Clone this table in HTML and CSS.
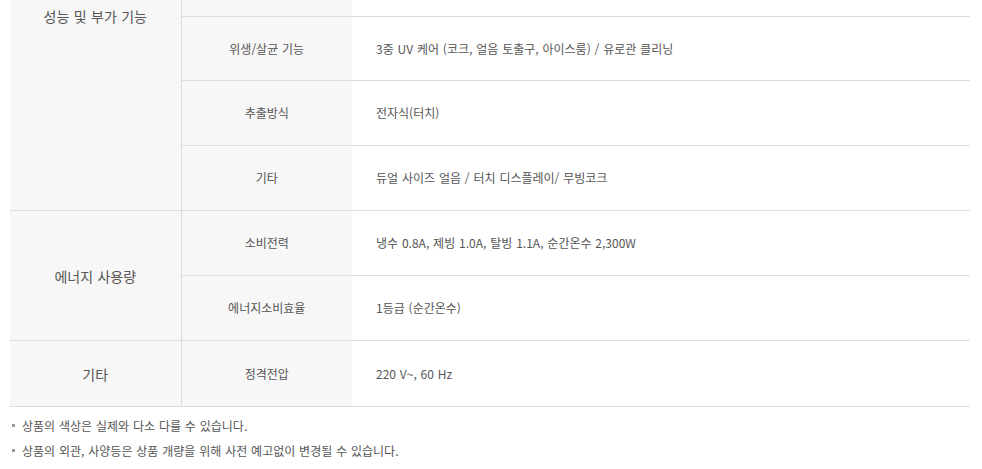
FILE: index.html
```html
<!DOCTYPE html>
<html lang="ko">
<head>
<meta charset="utf-8">
<link rel="stylesheet" href="styles.css">
</head>
<body>
<div class="spec">
  <table class="spec-table">
    <colgroup>
      <col class="c1"><col class="c2"><col class="c3">
    </colgroup>
    <tbody>
      <tr class="row-cut">
        <th class="group group-top" rowspan="4"><span>성능 및 부가 기능</span></th>
        <th class="sub"></th>
        <td class="val"></td>
      </tr>
      <tr class="row-first">
        <th class="sub">위생/살균 기능</th>
        <td class="val">3중 UV 케어 (코크, 얼음 토출구, 아이스룸) / 유로관 클리닝</td>
      </tr>
      <tr>
        <th class="sub">추출방식</th>
        <td class="val">전자식(터치)</td>
      </tr>
      <tr>
        <th class="sub">기타</th>
        <td class="val">듀얼 사이즈 얼음 / 터치 디스플레이/ 무빙코크</td>
      </tr>
      <tr>
        <th class="group" rowspan="2">에너지 사용량</th>
        <th class="sub">소비전력</th>
        <td class="val">냉수 0.8A, 제빙 1.0A, 탈빙 1.1A, 순간온수 2,300W</td>
      </tr>
      <tr>
        <th class="sub">에너지소비효율</th>
        <td class="val">1등급 (순간온수)</td>
      </tr>
      <tr class="row-last">
        <th class="group">기타</th>
        <th class="sub">정격전압</th>
        <td class="val">220 V~, 60 Hz</td>
      </tr>
    </tbody>
  </table>
  <ul class="notes">
    <li>상품의 색상은 실제와 다소 다를 수 있습니다.</li>
    <li>상품의 외관, 사양등은 상품 개량을 위해 사전 예고없이 변경될 수 있습니다.</li>
  </ul>
</div>
</body>
</html>
```

FILE: styles.css
```css
html, body {
  margin: 0;
  padding: 0;
  background: #ffffff;
}
body {
  font-family: "Noto Sans CJK KR", "Noto Sans", sans-serif;
  color: #555555;
}
.spec {
  padding: 0 12px 0 10px;
}
.spec-table {
  width: 960px;
  border-collapse: collapse;
  table-layout: fixed;
  font-size: 12px;
  line-height: 20px;
  word-spacing: 0.5px;
}
.c1 { width: 171px; }
.c2 { width: 171px; }
.c3 { width: 618px; }
.spec-table th,
.spec-table td {
  font-weight: 400;
  height: 64px;
  padding: 0;
  border-bottom: 1px solid #dddddd;
  vertical-align: middle;
}
.spec-table th {
  background: #f7f7f7;
  text-align: center;
  color: #555555;
}
.spec-table .group {
  font-size: 14px;
  border-right: 1px solid #dddddd;
}
.spec-table .val {
  text-align: left;
  padding-left: 24px;
  background: #ffffff;
  color: #555555;
}
.spec-table .row-cut th,
.spec-table .row-cut td {
  height: 16px;
}
.spec-table .row-first th,
.spec-table .row-first td {
  height: 63px;
}
.spec-table .group-top {
  vertical-align: top;
  padding-top: 6px;
}
.spec-table .row-last th,
.spec-table .row-last td {
  height: 65px;
}
.notes {
  list-style: none;
  margin: 6px 0 0 0;
  padding: 0;
  font-size: 12px;
  line-height: 25px;
  word-spacing: 0.5px;
  color: #555555;
}
.notes li {
  display: flex;
  align-items: center;
  gap: 7px;
}
.notes li::before {
  content: "";
  width: 3px;
  height: 3px;
  margin-left: 2px;
  background: #999999;
  flex: none;
}
```
